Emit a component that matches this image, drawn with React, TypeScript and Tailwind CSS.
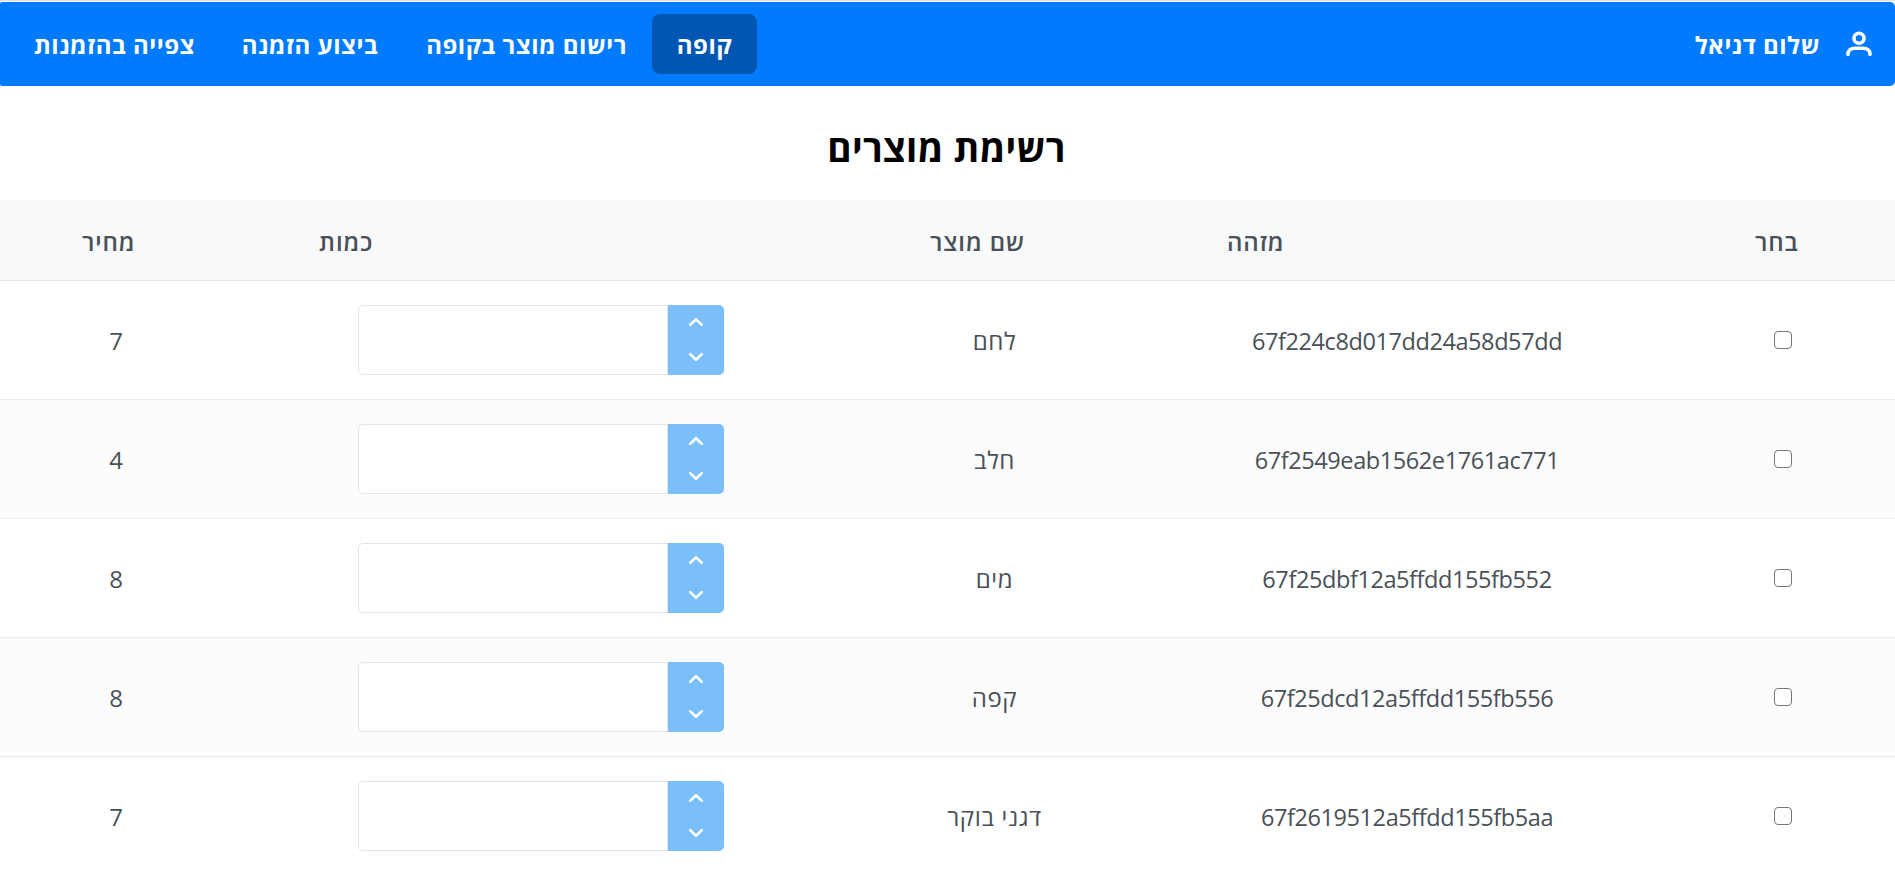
type Product = { id: string; name: string; price: number };

const products: Product[] = [
  { id: '67f224c8d017dd24a58d57dd', name: 'לחם', price: 7 },
  { id: '67f2549eab1562e1761ac771', name: 'חלב', price: 4 },
  { id: '67f25dbf12a5ffdd155fb552', name: 'מים', price: 8 },
  { id: '67f25dcd12a5ffdd155fb556', name: 'קפה', price: 8 },
  { id: '67f2619512a5ffdd155fb5aa', name: 'דגני בוקר', price: 7 },
];

function UserIcon() {
  return (
    <svg className="h-[26px] w-[26px]" viewBox="0 0 26 26" fill="none" stroke="currentColor" strokeWidth="3.6" strokeLinecap="round">
      <circle cx="13" cy="7.3" r="5" />
      <path d="M2 23.400v-.6c0-3.200 2.500-5.600 7-5.600h8c4.500 0 7 2.400 7 5.600v.6" />
    </svg>
  );
}

function Chevron({ up = false }: { up?: boolean }) {
  return (
    <svg className="mb-[2px] h-[10px] w-[16px]" viewBox="0 0 16 10" fill="none" stroke="currentColor" strokeWidth="2.6" strokeLinecap="round" strokeLinejoin="round">
      <path d={up ? 'M2.200 7.900 8 2.200l5.800 5.700' : 'M2.200 2.100 8 7.800l5.800-5.700'} />
    </svg>
  );
}

function QuantityInput() {
  return (
    <div className="flex h-[70px] w-[366px] text-white">
      <div className="flex w-14 flex-col overflow-hidden rounded-r-[5px] bg-[#7abefa]">
        <button className="flex h-[35px] items-center justify-center">
          <Chevron up />
        </button>
        <button className="flex h-[35px] items-center justify-center">
          <Chevron />
        </button>
      </div>
      <input className="h-full w-[310px] rounded-l-[5px] border border-[#e2e4e9] bg-white px-3 text-[#495057]" />
    </div>
  );
}

const grid = 'grid grid-cols-[219px_538px_288px_618px_232px]';

export default function App() {
  return (
    <div dir="rtl" className="h-[874px] w-[1895px] overflow-hidden bg-white font-['Open_Sans','Noto_Sans',sans-serif] text-[#495057]">
      <div className="h-[2px] border-b border-white bg-[#dee2e6]" />
      <header className="flex h-[84px] items-center justify-between rounded-l-[2px] rounded-r-[5px] bg-[#007bff] pr-[23px] pl-[10px] text-[24px] font-bold tracking-[0.5px] text-white">
        <div className="flex items-center gap-[26px]">
          <UserIcon />
          <span className="pt-[2px] whitespace-nowrap">שלום דניאל</span>
        </div>
        <nav className="flex items-center">
          <a className="flex h-[60px] w-[105px] items-center justify-center rounded-[8px] bg-[#0056b3] pt-[2px]">קופה</a>
          <a className="flex h-[60px] w-[251px] items-center justify-center pt-[2px] whitespace-nowrap">רישום מוצר בקופה</a>
          <a className="flex h-[60px] w-[182px] items-center justify-center pt-[2px] whitespace-nowrap">ביצוע הזמנה</a>
          <a className="flex h-[60px] w-[209px] items-center justify-center pt-[2px] whitespace-nowrap">צפייה בהזמנות</a>
        </nav>
      </header>
      <h1 className="flex h-[114px] items-center justify-center pt-[9px] pr-[2px] text-[37px] font-bold tracking-[0.3px] text-black">רשימת מוצרים</h1>
      <div className={`${grid} h-[81px] items-center border-b border-[#e4e8ec] bg-[#f8f9fb] pt-[4px] text-[24px] font-semibold tracking-[0.9px]`}>
        <div className="flex justify-end pl-[79px]">בחר</div>
        <div className="flex justify-end pl-[89px]">מזהה</div>
        <div className="flex justify-end pl-[80px]">שם מוצר</div>
        <div className="flex justify-end pl-[87px]">כמות</div>
        <div className="flex justify-end pl-[82px]">מחיר</div>
      </div>
      {products.map((p) => (
        <div key={p.id} className={`${grid} h-[119px] items-center justify-items-center border-b border-[#e9ecef] text-[24px] even:bg-[#fcfcfc]`}>
          <input type="checkbox" className="mr-[6px] mb-px ml-px h-[18px] w-[18px] appearance-none rounded-[4px] border-[1.5px] border-[#767676] bg-white" />
          <div className="pt-[4px] text-[23.5px] tracking-[-0.41px]">{p.id}</div>
          <div className="pt-[2px] pl-px tracking-[0.6px]">{p.name}</div>
          <QuantityInput />
          <div className="pt-[2px]">{p.price}</div>
        </div>
      ))}
    </div>
  );
}
